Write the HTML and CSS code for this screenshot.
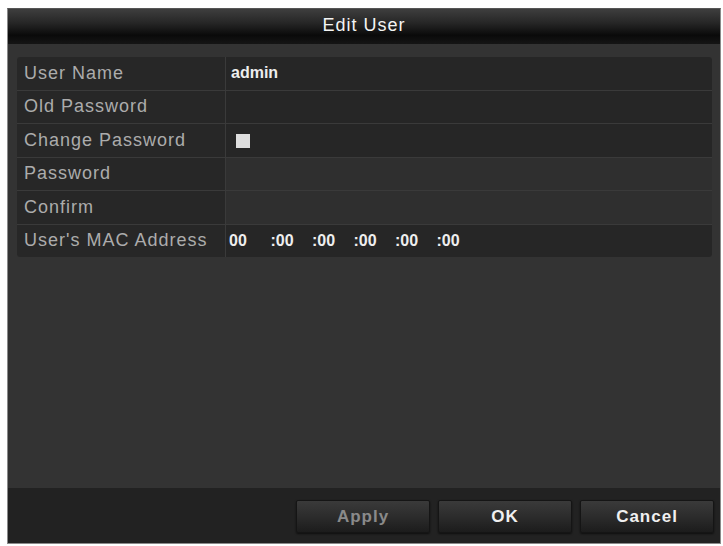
FILE: index.html
```html
<!DOCTYPE html>
<html>
<head>
<meta charset="utf-8">
<link rel="stylesheet" href="styles.css">
</head>
<body>
<div class="page">
  <div class="dialog">
    <div class="titlebar">Edit User</div>
    <div class="content">
      <div class="grid">
        <div class="label">User Name</div>
        <div class="value bright">admin</div>
        <div class="label">Old Password</div>
        <div class="value"></div>
        <div class="label">Change Password</div>
        <div class="value"><span class="checkbox"></span></div>
        <div class="label">Password</div>
        <div class="value disabled"></div>
        <div class="label">Confirm</div>
        <div class="value disabled"></div>
        <div class="label">User's MAC Address</div>
        <div class="value bright mac">
          <span class="seg">00</span><span class="seg">:00</span><span class="seg">:00</span><span class="seg">:00</span><span class="seg">:00</span><span class="seg">:00</span>
        </div>
      </div>
    </div>
    <div class="footer">
      <button class="btn dim">Apply</button>
      <button class="btn">OK</button>
      <button class="btn">Cancel</button>
    </div>
  </div>
</div>
</body>
</html>
```
FILE: styles.css
```css
html, body {
  margin: 0;
  padding: 0;
  background: #ffffff;
}
body {
  font-family: "Liberation Sans", Arial, sans-serif;
}
.page {
  padding: 8px 3px 3px 7px;
}
.dialog {
  width: 712px;
  height: 534px;
  background: #333333;
  border: 1px solid #8a8a8a;
  border-top-color: #555;
  display: flex;
  flex-direction: column;
}
.titlebar {
  height: 35px;
  flex: none;
  background: linear-gradient(#3e3e3e 0%, #262626 40%, #0a0a0a 75%, #151515 100%);
  color: #f4f4f4;
  font-size: 18px;
  letter-spacing: 1px;
  display: flex;
  align-items: center;
  justify-content: center;
  padding-bottom: 2px;
  box-sizing: border-box;
}
.content {
  flex: 1;
  padding: 13px 8px 0 9px;
}
.grid {
  display: grid;
  grid-template-columns: 208px 1fr;
  grid-auto-rows: 32.5px;
  gap: 1px;
  background: #3a3a3a;
  border-radius: 3px;
  overflow: hidden;
  width: 695px;
}
.label {
  background: #272727;
  color: #acacac;
  font-size: 18px;
  letter-spacing: 1px;
  display: flex;
  align-items: center;
  padding-left: 7px;
}
.value {
  background: #262626;
  display: flex;
  align-items: center;
  padding-left: 5px;
  font-size: 16px;
  font-weight: bold;
}
.value.disabled {
  background: #2f2f2f;
}
.bright {
  color: #eeeeee;
}
.checkbox {
  width: 14px;
  height: 14px;
  background: #dedede;
  margin-left: 5px;
  margin-top: 1px;
}
.mac {
  padding-left: 3px;
}
.seg {
  width: 41.5px;
  flex: none;
}
.footer {
  height: 55px;
  flex: none;
  background: #222222;
  display: flex;
  justify-content: flex-end;
  align-items: flex-start;
  gap: 8px;
  padding: 12px 6px 0 0;
  box-sizing: border-box;
}
.btn {
  width: 134px;
  height: 33px;
  background: linear-gradient(#3a3a3a 0%, #2c2c2c 50%, #1c1c1c 100%);
  border: 1px solid #151515;
  border-radius: 2px;
  color: #f0f0f0;
  font-family: "Liberation Sans", Arial, sans-serif;
  font-size: 17px;
  font-weight: bold;
  letter-spacing: 1px;
  box-shadow: 0 1px 2px rgba(0,0,0,0.6);
}
.btn.dim {
  color: #8a8a8a;
}
```
